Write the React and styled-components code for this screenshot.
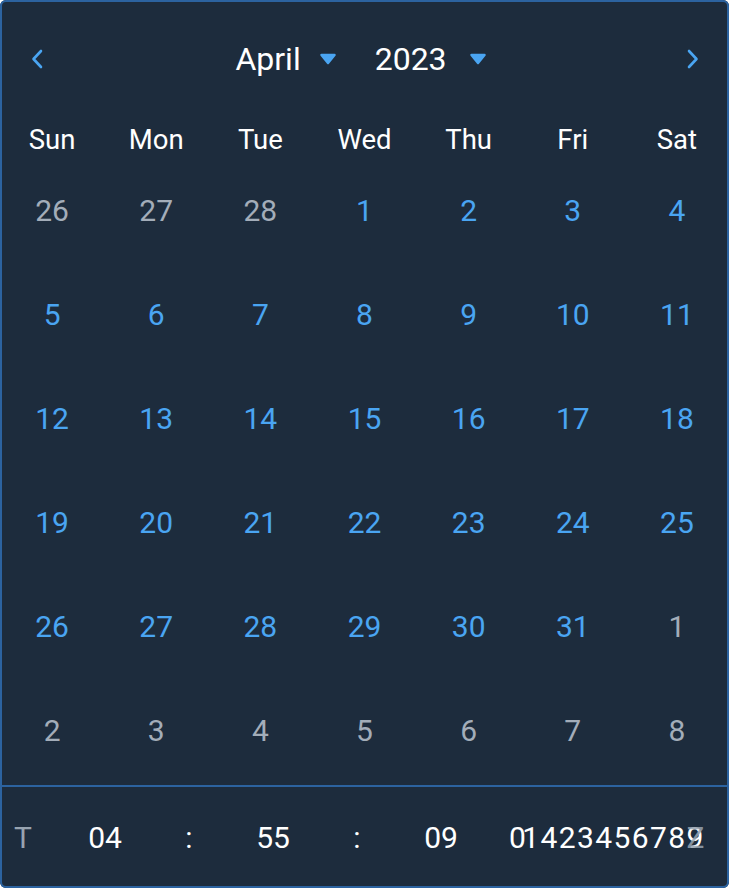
import React from "react";
import styled, { createGlobalStyle } from "styled-components";

const Global = createGlobalStyle`
  html, body { margin: 0; padding: 0; background: #ffffff; }
  body { font-family: Roboto, "Noto Sans", sans-serif; }
  * { box-sizing: border-box; }
`;

const Panel = styled.div`
  width: 729px;
  height: 888px;
  background: #1d2c3d;
  box-shadow: inset 0 0 0 2px #2c63a0;
  border-radius: 6px;
  display: flex;
  flex-direction: column;
  overflow: hidden;
`;

const Header = styled.div`
  height: 117px;
  display: flex;
  align-items: center;
  justify-content: space-between;
  padding: 0 27px 0 28px;
`;

const NavButton = styled.button`
  background: none;
  border: 0;
  padding: 0;
  width: 18px;
  height: 24px;
  display: flex;
  align-items: center;
  justify-content: center;
  cursor: pointer;
`;

const Selects = styled.div`
  display: flex;
  align-items: center;
  gap: 38px;
  margin-right: 8px;
`;

const Select = styled.div`
  display: flex;
  align-items: center;
  gap: ${(p) => p.$gap}px;
  color: #ffffff;
  font-size: 32px;
`;

const Weekdays = styled.div`
  display: grid;
  grid-template-columns: repeat(7, 1fr);
  height: 44px;
  align-items: center;
`;

const Weekday = styled.div`
  text-align: center;
  color: #ffffff;
  font-size: 27.5px;
`;

const Days = styled.div`
  display: grid;
  grid-template-columns: repeat(7, 1fr);
  grid-auto-rows: 104px;
`;

const Day = styled.div`
  display: flex;
  align-items: center;
  justify-content: center;
  font-size: 30px;
  padding-bottom: 6px;
  color: ${(p) => (p.$muted ? "#a3adb9" : "#4aa5f2")};
`;

const Divider = styled.div`
  height: 2px;
  background: #2c63a0;
`;

const Footer = styled.div`
  flex: 1;
  display: flex;
  align-items: center;
  padding-left: 14px;
  color: #ffffff;
  font-size: 30px;
`;

const Prefix = styled.div`
  width: 49px;
  color: #97a3b0;
`;

const TimeCell = styled.div`
  width: 84px;
  text-align: center;
`;

const Fraction = styled.div`
  position: relative;
  padding-left: 26px;
  letter-spacing: 1.4px;
  white-space: nowrap;
`;

const Lead = styled.span`
  margin-right: -5px;
`;

const Suffix = styled.span`
  position: absolute;
  right: -1px;
  top: 0;
  color: #97a3b0;
  opacity: 0.85;
`;

const Chevron = ({ dir }) => (
  <svg width="16" height="22" viewBox="0 0 16 22">
    <path
      d={dir === "left" ? "M12 3 L4.5 11 L12 19" : "M4 3 L11.5 11 L4 19"}
      fill="none"
      stroke="#4aa5f2"
      strokeWidth="2.6"
      strokeLinecap="round"
      strokeLinejoin="round"
    />
  </svg>
);

const Caret = () => (
  <svg width="18" height="12" viewBox="0 0 18 12">
    <path d="M2.5 2 H15.5 L9 10 Z" fill="#4aa5f2" stroke="#4aa5f2" strokeWidth="2.5" strokeLinejoin="round" />
  </svg>
);

const weekdays = ["Sun", "Mon", "Tue", "Wed", "Thu", "Fri", "Sat"];

const days = [
  ...[26, 27, 28].map((d) => ({ d, muted: true })),
  ...Array.from({ length: 31 }, (_, i) => ({ d: i + 1, muted: false })),
  ...[1, 2, 3, 4, 5, 6, 7, 8].map((d) => ({ d, muted: true })),
];

export default function App() {
  return (
    <>
      <Global />
      <Panel>
        <Header>
          <NavButton>
            <Chevron dir="left" />
          </NavButton>
          <Selects>
            <Select $gap={18}>
              April <Caret />
            </Select>
            <Select $gap={22}>
              2023 <Caret />
            </Select>
          </Selects>
          <NavButton>
            <Chevron dir="right" />
          </NavButton>
        </Header>
        <Weekdays>
          {weekdays.map((w) => (
            <Weekday key={w}>{w}</Weekday>
          ))}
        </Weekdays>
        <Days>
          {days.map((x, i) => (
            <Day key={i} $muted={x.muted}>
              {x.d}
            </Day>
          ))}
        </Days>
        <Divider />
        <Footer>
          <Prefix>T</Prefix>
          <TimeCell>04</TimeCell>
          <TimeCell>:</TimeCell>
          <TimeCell>55</TimeCell>
          <TimeCell>:</TimeCell>
          <TimeCell>09</TimeCell>
          <Fraction>
            <Lead>0</Lead>1423456789
            <Suffix>Z</Suffix>
          </Fraction>
        </Footer>
      </Panel>
    </>
  );
}
